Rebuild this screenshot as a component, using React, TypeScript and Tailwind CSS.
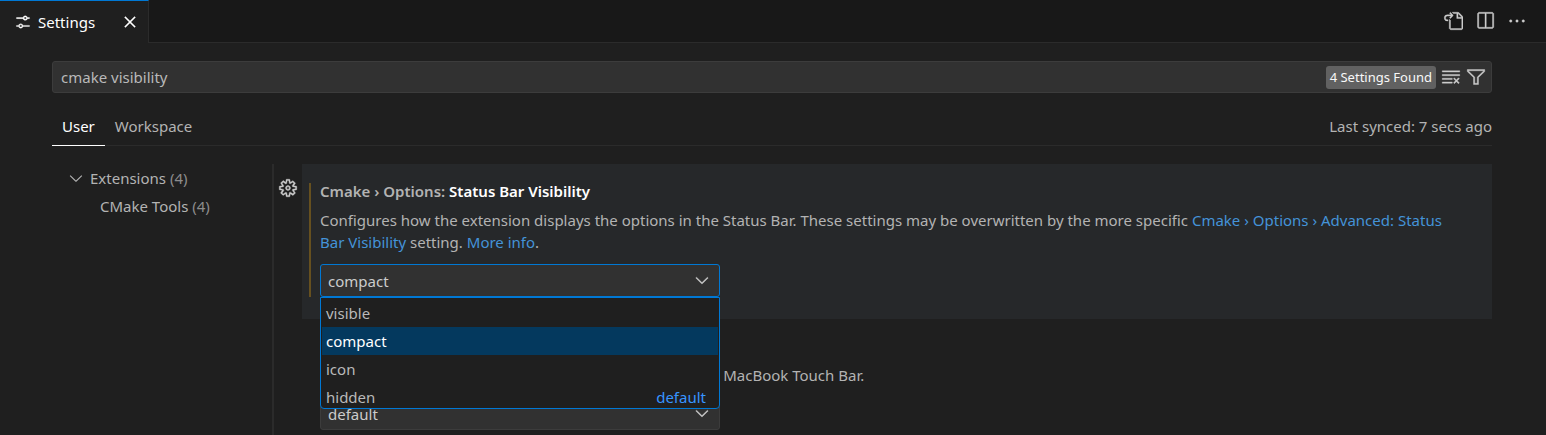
import { useState } from 'react';
import type { ReactNode } from 'react';
import {
  VscChevronDown,
  VscClearAll,
  VscClose,
  VscEllipsis,
  VscFilter,
  VscGear,
  VscGoToFile,
  VscSettings,
  VscSplitHorizontal,
} from 'react-icons/vsc';

const LINK = 'text-[#4493d8]';

function IconButton({ label, children, className = '' }: { label: string; children: ReactNode; className?: string }) {
  return (
    <button type="button" aria-label={label} className={`flex items-center justify-center ${className}`}>
      {children}
    </button>
  );
}

function TitleBar() {
  return (
    <header className="flex h-[43px] shrink-0 bg-[#181818]">
      <div className="flex items-center border-t border-r border-t-[#0078d4] border-r-[#2b2b2b] bg-[#1f1f1f] pr-2 pl-3.5 text-white">
        <VscSettings className="size-[18px] stroke-[0.3]" />
        <span className="pl-1.5">Settings</span>
        <IconButton label="Close tab" className="ml-[25px]">
          <VscClose className="size-5 stroke-[0.3]" />
        </IconButton>
      </div>
      <div className="flex flex-1 items-center justify-end gap-3 border-b border-[#2b2b2b] pr-[19px] text-[#cccccc]">
        <IconButton label="Open Settings (JSON)">
          <VscGoToFile className="size-5 stroke-[0.3]" />
        </IconButton>
        <IconButton label="Split Editor Right">
          <VscSplitHorizontal className="size-5 stroke-[0.3]" />
        </IconButton>
        <IconButton label="More Actions">
          <VscEllipsis className="size-5 stroke-[0.3]" />
        </IconButton>
      </div>
    </header>
  );
}

function SearchBox() {
  const [query, setQuery] = useState('cmake visibility');
  return (
    <div className="flex h-8 items-center gap-[5px] rounded-[3px] border border-[#3c3c3c] bg-[#313131] pr-[5px] pl-2 text-[#cccccc]">
      <input
        type="text"
        aria-label="Search settings"
        value={query}
        onChange={(e) => setQuery(e.target.value)}
        className="min-w-0 flex-1 bg-transparent text-[#b9b9b9] outline-none"
      />
      <span className="rounded-[3px] bg-[#616161] px-1 text-[13px] leading-[23px] text-[#f8f8f8]">4 Settings Found</span>
      <IconButton label="Clear Settings Search Input">
        <VscClearAll className="size-5 stroke-[0.3]" />
      </IconButton>
      <IconButton label="Filter Settings">
        <VscFilter className="size-5 stroke-[0.3]" />
      </IconButton>
    </div>
  );
}

function ScopeTabs() {
  return (
    <div className="mt-3.5 flex h-[39px] border-b border-[#2b2b2b]">
      <button type="button" className="-mb-px border-b border-white px-2.5 text-white">
        User
      </button>
      <button type="button" className="px-2.5">
        Workspace
      </button>
      <span className="ml-auto self-center">Last synced: 7 secs ago</span>
    </div>
  );
}

function Outline() {
  return (
    <nav aria-label="Settings groups" className="w-[222px] shrink-0 border-r-2 border-[#2b2b2b] text-[#b3b3b3]">
      <ul>
        <li className="flex h-7 items-center pl-3.5">
          <VscChevronDown className="size-5" />
          <span className="pl-1">
            Extensions <span className="text-[#8c8c8c]">(4)</span>
          </span>
        </li>
        <li className="flex h-7 items-center pl-12">
          <span>
            CMake Tools <span className="text-[#8c8c8c]">(4)</span>
          </span>
        </li>
      </ul>
    </nav>
  );
}

function Dropdown({
  label,
  value,
  options,
  focused = false,
  children,
}: {
  label: string;
  value: string;
  options: string[];
  focused?: boolean;
  children?: ReactNode;
}) {
  return (
    <div className="relative mt-[11px] w-[400px] max-w-full text-[#cccccc]">
      <select
        aria-label={label}
        defaultValue={value}
        className={`block h-[33px] w-full appearance-none rounded-[3px] border bg-[#313131] px-[7px] outline-none ${
          focused ? 'border-[#0078d4]' : 'border-[#3c3c3c]'
        }`}
      >
        {options.map((o) => (
          <option key={o}>{o}</option>
        ))}
      </select>
      <VscChevronDown className="pointer-events-none absolute top-1.5 right-2 size-5 stroke-[0.3]" />
      {children}
    </div>
  );
}

function OptionList({ options, selected, fallback }: { options: string[]; selected: string; fallback: string }) {
  return (
    <ul
      role="listbox"
      aria-label="Status Bar Visibility options"
      className="absolute top-full left-0 z-10 max-h-28 w-full overflow-hidden rounded-b-[4px] border border-[#0078d4] bg-[#1f1f1f] px-px pt-px text-[#b9b9b9]"
    >
      {options.map((o) => (
        <li
          key={o}
          role="option"
          aria-selected={o === selected}
          className={`flex h-7 items-center justify-between pr-3 pl-1 ${o === selected ? 'bg-[#04395e] text-white' : ''}`}
        >
          {o}
          {o === fallback && <span className="text-[#3794ff]">default</span>}
        </li>
      ))}
    </ul>
  );
}

function Title({ category, name }: { category: string; name: string }) {
  return (
    <h3 className="font-semibold">
      {category}: <span className="text-white">{name}</span>
    </h3>
  );
}

function SettingsList() {
  return (
    <main className="min-w-0 flex-1">
      <section className="flex">
        <div className="flex w-7 shrink-0 justify-center pt-3.5">
          <IconButton label="More Actions for this setting" className="h-5 text-[#cccccc]">
            <VscGear className="size-5 stroke-[0.3]" />
          </IconButton>
        </div>
        <div className="min-w-0 flex-1 bg-[#26282a] pt-4 pr-6 pb-[22px] pl-[7px]">
          <div className="relative pl-[11px]">
            <span className="absolute top-[3px] bottom-0 left-0 w-0.5 bg-[#66501f]" />
            <Title category="Cmake › Options" name="Status Bar Visibility" />
            <p className="mt-[7px]">
              Configures how the extension displays the options in the Status Bar. These settings may be overwritten by the more specific{' '}
              <a href="#advanced" className={LINK}>
                Cmake › Options › Advanced: Status Bar Visibility
              </a>{' '}
              setting.{' '}
              <a href="#more" className={LINK}>
                More info
              </a>
              .
            </p>
            <Dropdown
              label="Status Bar Visibility"
              value="compact"
              options={['visible', 'compact', 'icon', 'hidden']}
              focused
            >
              <OptionList options={['visible', 'compact', 'icon', 'hidden']} selected="compact" fallback="hidden" />
            </Dropdown>
          </div>
        </div>
      </section>
      <section className="pt-4 pr-6 pb-[22px] pl-[46px]">
        <Title category="Cmake › Touchbar" name="Visibility" />
        <p className="mt-[7px]">Configures the visibility of all CMake Tools commands on MacBook Touch Bar.</p>
        <Dropdown label="Touchbar Visibility" value="default" options={['default', 'hidden']} />
      </section>
    </main>
  );
}

export default function App() {
  return (
    <div className="flex h-screen flex-col overflow-hidden bg-[#1f1f1f] font-['Noto_Sans','Open_Sans',sans-serif] text-[15px] leading-[22px] text-[#b3b3b3]">
      <TitleBar />
      <div className="flex min-h-0 flex-1 flex-col pt-[18px] pr-[54px] pl-[52px]">
        <SearchBox />
        <ScopeTabs />
        <div className="mt-[18px] flex min-h-0 flex-1">
          <Outline />
          <SettingsList />
        </div>
      </div>
    </div>
  );
}
